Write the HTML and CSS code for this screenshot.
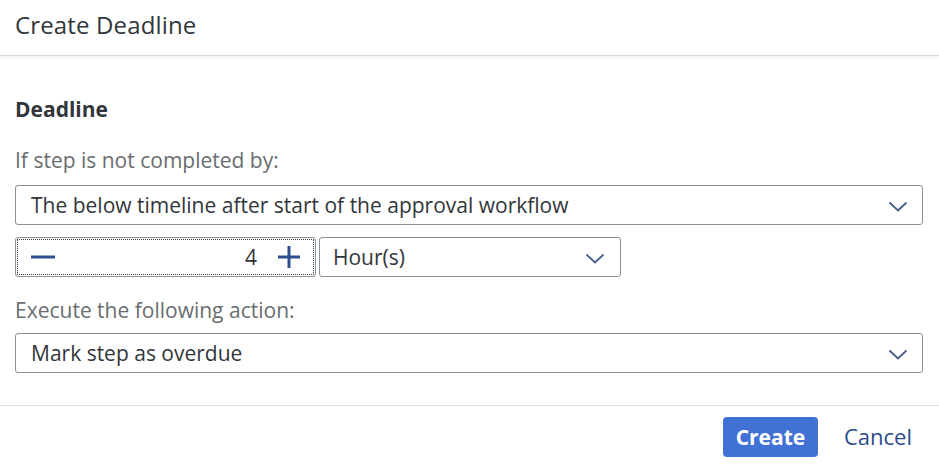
FILE: index.html
```html
<!DOCTYPE html>
<html>
<head>
<meta charset="utf-8">
<link rel="stylesheet" href="styles.css">
</head>
<body>
<div class="dialog">
  <header class="header"><h1 class="title">Create Deadline</h1></header>
  <main class="content">
    <h2 class="section">Deadline</h2>
    <div class="label">If step is not completed by:</div>
    <div class="select wide first">
      <span class="value">The below timeline after start of the approval workflow</span>
      <svg class="chev" width="20" height="12" viewBox="0 0 20 12"><path d="M1.5 1.5 L10 9.5 L18.5 1.5" fill="none" stroke="#475e8a" stroke-width="1.8"/></svg>
    </div>
    <div class="row">
      <div class="stepper">
        <svg class="minus" width="24" height="4" viewBox="0 0 24 4"><rect x="0" y="0.5" width="24" height="3" fill="#2d4f8f"/></svg>
        <span class="num">4</span>
        <svg class="plus" width="22" height="22" viewBox="0 0 22 22"><rect x="0" y="9.5" width="22" height="3" fill="#2d4f8f"/><rect x="9.5" y="0" width="3" height="22" fill="#2d4f8f"/></svg>
      </div>
      <div class="select unit">
        <span class="value">Hour(s)</span>
        <svg class="chev" width="20" height="12" viewBox="0 0 20 12"><path d="M1.5 1.5 L10 9.5 L18.5 1.5" fill="none" stroke="#475e8a" stroke-width="1.8"/></svg>
      </div>
    </div>
    <div class="label label2">Execute the following action:</div>
    <div class="select wide">
      <span class="value">Mark step as overdue</span>
      <svg class="chev" width="20" height="12" viewBox="0 0 20 12"><path d="M1.5 1.5 L10 9.5 L18.5 1.5" fill="none" stroke="#475e8a" stroke-width="1.8"/></svg>
    </div>
  </main>
  <footer class="footer">
    <button class="btn primary">Create</button>
    <button class="btn link">Cancel</button>
  </footer>
</div>
</body>
</html>
```
FILE: styles.css
```css
* { box-sizing: border-box; }
html, body { margin: 0; padding: 0; background: #fff; }
body {
  font-family: "Open Sans", "Noto Sans", sans-serif;
  color: #32363a;
  width: 939px;
  height: 466px;
  overflow: hidden;
}
.dialog { display: flex; flex-direction: column; height: 466px; }
.header {
  height: 56px;
  display: flex;
  align-items: center;
  padding-left: 15px;
  border-bottom: 1px solid #d6d6d6;
  box-shadow: 0 2px 3px rgba(0,0,0,0.06);
}
.title { margin: 0; font-size: 24px; font-weight: 400; line-height: 30px; color: #32363a; margin-top: -6px; letter-spacing: 0.15px; }
.content { padding: 0 16px 0 15px; flex: 1; display: flex; flex-direction: column; }
.section { margin: 40px 0 0 0; font-size: 21px; font-weight: 700; line-height: 26px; color: #32363a; }
.label { margin-top: 25px; font-size: 21px; line-height: 26px; color: #6a6d70; }
.label2 { margin-top: 20px; }
.select {
  height: 40px;
  border: 1px solid #89919a;
  border-radius: 3px;
  display: flex;
  align-items: center;
  justify-content: space-between;
  padding: 0 14px 0 15px;
  background: #fff;
}
.wide { margin-top: 10px; width: 908px; }
.first { margin-top: 12px; }
.value { font-size: 21px; color: #32363a; }
.chev { display: block; margin-top: 3px; }
.row { display: flex; gap: 3px; margin-top: 12px; }
.stepper {
  width: 301px;
  height: 40px;
  border: 1px solid #89919a;
  border-radius: 3px;
  outline: 1px dotted #32363a;
  outline-offset: -3px;
  display: flex;
  align-items: center;
  padding: 0 15px 0 15px;
}
.minus { display: block; }
.num { margin-left: auto; font-size: 21px; margin-right: 21px; }
.plus { display: block; }
.unit { width: 302px; height: 40px; padding-left: 13px; padding-right: 15px; }
.row .select { margin-top: 0; }
.footer {
  height: 61px;
  border-top: 1px solid #e0e0e0;
  display: flex;
  align-items: center;
  justify-content: flex-end;
  padding-right: 17px;
  gap: 16px;
}
.btn { font-family: inherit; border: none; cursor: pointer; }
.primary {
  background: #4271d6;
  color: #fff;
  font-weight: 700;
  font-size: 21px;
  height: 40px;
  width: 95px;
  border-radius: 4px;
  margin-top: 1px;
  padding: 0;
}
.link { background: transparent; color: #2b4b8b; font-size: 22px; padding: 0 10px; height: 40px; }
```
